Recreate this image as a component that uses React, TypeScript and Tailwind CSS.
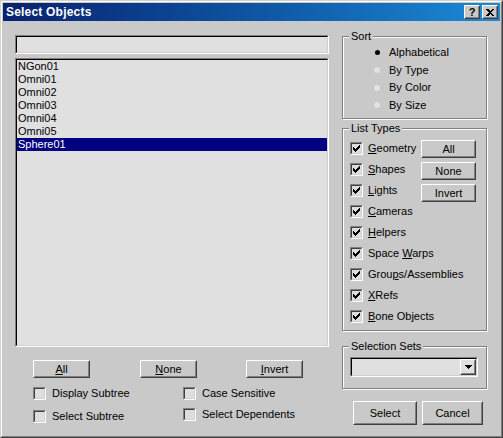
import React from "react";

function U({ children }: { children: React.ReactNode }) {
  return <span className="underline decoration-1 underline-offset-[1px]">{children}</span>;
}

function Btn({ className = "", children }: { className?: string; children?: React.ReactNode }) {
  return (
    <div className={`box-border flex shrink-0 border border-t-white border-l-white border-r-[#404040] border-b-[#404040] ${className}`}>
      <div className="flex-1 flex items-center justify-center border border-t-transparent border-l-transparent border-r-[#808080] border-b-[#808080] leading-none">
        {children}
      </div>
    </div>
  );
}

function Sunken({ className = "", inner = "", children }: { className?: string; inner?: string; children?: React.ReactNode }) {
  return (
    <div className={`box-border flex border border-t-[#808080] border-l-[#808080] border-r-white border-b-white ${className}`}>
      <div className={`flex-1 min-w-0 border border-t-[#000] border-l-[#000] border-r-[#d4d0c8] border-b-[#d4d0c8] bg-[#e0e0e0] ${inner}`}>
        {children}
      </div>
    </div>
  );
}

function Check({ checked }: { checked?: boolean }) {
  return (
    <span className="box-border w-[13px] h-[13px] flex shrink-0 border border-t-[#808080] border-l-[#808080] border-r-white border-b-white">
      <span className="flex-1 flex items-center justify-center border border-t-[#404040] border-l-[#404040] border-r-[#d4d0c8] border-b-[#d4d0c8] bg-[#dedede]">
        {checked && (
          <svg width="7" height="7" viewBox="0 0 7 7" shapeRendering="crispEdges">
            <path d="M0 2h1v3H0zM1 3h1v3H1zM2 4h1v3H2zM3 3h1v3H3zM4 2h1v3H4zM5 1h1v3H5zM6 0h1v3H6z" fill="#000" />
          </svg>
        )}
      </span>
    </span>
  );
}

function Radio({ on }: { on?: boolean }) {
  return (
    <span className="w-[12px] h-[12px] flex items-center justify-center shrink-0">
      {on ? (
        <span className="w-[5px] h-[5px] rounded-full bg-black" />
      ) : (
        <span className="w-[6px] h-[6px] rounded-full bg-[#e2e2e2]" />
      )}
    </span>
  );
}

function Group({ label, className = "", children }: { label: string; className?: string; children?: React.ReactNode }) {
  return (
    <fieldset className={`box-border w-[145px] min-w-0 border border-[#808080] shadow-[inset_1px_1px_0_#fff,1px_1px_0_#fff] ${className}`}>
      <legend className="ml-[6px] px-[2px] h-[13px] text-[11px] leading-[13px] bg-[#c8c9c8]">{label}</legend>
      {children}
    </fieldset>
  );
}

function TitleBar() {
  return (
    <div className="h-[18px] shrink-0 flex items-center bg-gradient-to-r from-[#0a2070] to-[#1c8ad6]">
      <span className="ml-[3px] text-white font-bold text-[12px] leading-none tracking-[0.2px]">Select Objects</span>
      <div className="ml-auto mr-[2px] flex gap-[2px]">
        <Btn className="w-[16px] h-[14px] bg-[#c8c9c8]">
          <span className="font-bold text-[11px] leading-none">?</span>
        </Btn>
        <Btn className="w-[16px] h-[14px] bg-[#c8c9c8]">
          <svg width="8" height="7" viewBox="0 0 8 7" shapeRendering="crispEdges">
            <path d="M0 0h2l2 2 2-2h2L5 3.5 8 7H6L4 5 2 7H0l3-3.5z" fill="#000" />
          </svg>
        </Btn>
      </div>
    </div>
  );
}

const items = ["NGon01", "Omni01", "Omni02", "Omni03", "Omni04", "Omni05", "Sphere01"];

function CheckRow({ label, checked, gap = "gap-[6px]", className = "" }: { label: React.ReactNode; checked?: boolean; gap?: string; className?: string }) {
  return (
    <div className={`flex items-center ${gap} h-[13px] ${className}`}>
      <Check checked={checked} />
      <span className="leading-[13px] whitespace-nowrap">{label}</span>
    </div>
  );
}

function Left() {
  return (
    <div className="ml-[12px] w-[314px] flex flex-col pt-[14px]">
      <Sunken className="h-[19px]" />
      <Sunken className="mt-[4px] h-[289px]">
        <div className="flex flex-col">
          {items.map((it) => (
            <div
              key={it}
              className={`h-[13px] leading-[13px] pl-[1px] ${it === "Sphere01" ? "bg-[#000080] text-white" : ""}`}
            >
              {it}
            </div>
          ))}
        </div>
      </Sunken>
      <div className="mt-[13px] flex h-[18px]">
        <Btn className="ml-[18px] w-[57px] h-[18px]"><span><U>A</U>ll</span></Btn>
        <Btn className="ml-[50px] w-[57px] h-[18px]"><span><U>N</U>one</span></Btn>
        <Btn className="ml-[49px] w-[57px] h-[18px]"><span><U>I</U>nvert</span></Btn>
      </div>
      <div className="mt-[9px] flex">
        <div className="ml-[18px] w-[150px] flex flex-col gap-[10px]">
          <CheckRow label="Display Subtree" />
          <CheckRow label="Select Subtree" />
        </div>
        <div className="flex flex-col gap-[8px]">
          <CheckRow label="Case Sensitive" />
          <CheckRow label="Select Dependents" />
        </div>
      </div>
    </div>
  );
}

const sorts = ["Alphabetical", "By Type", "By Color", "By Size"];

const types: React.ReactNode[] = [
  <><U>G</U>eometry</>,
  <><U>S</U>hapes</>,
  <><U>L</U>ights</>,
  <><U>C</U>ameras</>,
  <><U>H</U>elpers</>,
  <>Space <U>W</U>arps</>,
  <>Grou<U>p</U>s/Assemblies</>,
  <><U>X</U>Refs</>,
  <><U>B</U>one Objects</>,
];

const typeButtons: { label: string; mt: string }[] = [
  { label: "All", mt: "mt-[2px]" },
  { label: "None", mt: "mt-[3px]" },
  { label: "Invert", mt: "mt-[4px]" },
];

function Right() {
  return (
    <div className="ml-[13px] flex flex-col">
      <Group label="Sort" className="mt-[9px] pt-[1px] pb-[4px]">
        <div className="flex flex-col pl-[28px]">
          {sorts.map((s, i) => (
            <div key={s} className="h-[17.5px] flex items-center gap-[6px]">
              <Radio on={i === 0} />
              <span className="leading-[13px]">{s}</span>
            </div>
          ))}
        </div>
      </Group>
      <Group label="List Types" className="mt-[3px] pt-[3px] pb-[3px]">
        <div className="flex flex-col pl-[7px] pr-[10px]">
          {types.map((t, i) => (
            <div key={i} className="h-[21px] flex items-start">
              <CheckRow label={t} checked gap="gap-[5px]" className="mt-[4px]" />
              {typeButtons[i] && (
                <Btn className={`ml-auto w-[55px] h-[18px] ${typeButtons[i].mt}`}>{typeButtons[i].label}</Btn>
              )}
            </div>
          ))}
        </div>
      </Group>
      <Group label="Selection Sets" className="mt-[9px] pt-[4px] pb-[11px]">
        <Sunken className="ml-[7px] w-[128px] h-[20px]" inner="flex justify-end">
          <Btn className="w-[16px] h-full">
            <svg width="7" height="4" viewBox="0 0 7 4" shapeRendering="crispEdges">
              <path d="M0 0h7v1H0zM1 1h5v1H1zM2 2h3v1H2zM3 3h1v1H3z" fill="#000" />
            </svg>
          </Btn>
        </Sunken>
      </Group>
      <div className="mt-[12px] flex">
        <Btn className="ml-[11px] w-[64px] h-[24px]">Select</Btn>
        <Btn className="ml-[5px] w-[61px] h-[24px]">Cancel</Btn>
      </div>
    </div>
  );
}

export default function App() {
  return (
    <div className="w-[503px] h-[438px] box-border flex bg-[#c8c9c8] font-['Liberation_Sans',Arial,sans-serif] text-[11px] text-black border border-t-[#d4d0c8] border-l-[#d4d0c8] border-r-[#404040] border-b-[#404040]">
      <div className="flex-1 flex flex-col border border-t-white border-l-white border-r-[#808080] border-b-[#808080] p-[1px]">
        <TitleBar />
        <div className="flex-1 flex">
          <Left />
          <Right />
        </div>
      </div>
    </div>
  );
}
